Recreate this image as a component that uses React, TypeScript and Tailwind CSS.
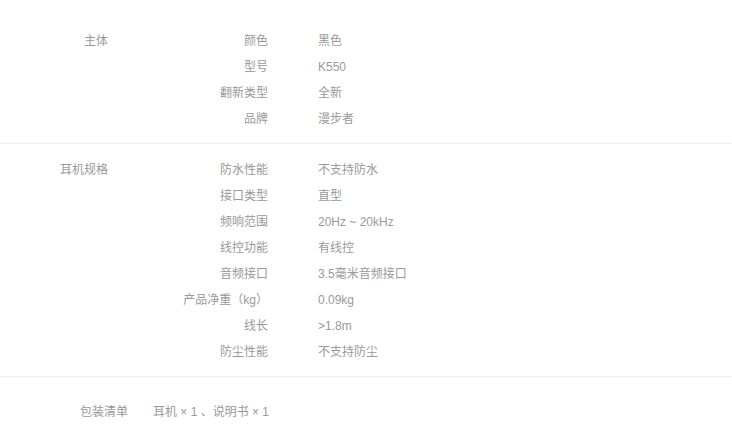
const groups = [
  {
    title: "主体",
    items: [
      ["颜色", "黑色"],
      ["型号", "K550"],
      ["翻新类型", "全新"],
      ["品牌", "漫步者"],
    ],
  },
  {
    title: "耳机规格",
    items: [
      ["防水性能", "不支持防水"],
      ["接口类型", "直型"],
      ["频响范围", "20Hz ~ 20kHz"],
      ["线控功能", "有线控"],
      ["音频接口", "3.5毫米音频接口"],
      ["产品净重（kg）", "0.09kg"],
      ["线长", ">1.8m"],
      ["防尘性能", "不支持防尘"],
    ],
  },
];

export default function App() {
  return (
    <div
      className="w-[732px] h-[431px] bg-white text-[12px] text-[#999] overflow-hidden"
      style={{ fontFamily: '"Liberation Sans", "Noto Sans CJK SC", sans-serif' }}
    >
      <div className="pt-[15px]">
        {groups.map((g) => (
          <div key={g.title} className="flex py-3 border-b border-[#eee] mr-px">
            <div className="w-[108px] text-right pt-[2px] leading-[24px]">{g.title}</div>
            <div className="flex flex-col">
              {g.items.map(([k, v]) => (
                <div key={k} className="flex pt-[2px] leading-[24px]">
                  <div className="w-[160px] text-right">{k}</div>
                  <div className="ml-[50px]">{v}</div>
                </div>
              ))}
            </div>
          </div>
        ))}
        <div className="flex pt-[23px] leading-[24px]">
          <div className="w-[128px] text-right">包装清单</div>
          <div className="ml-[25px]">耳机 × 1 、说明书 × 1</div>
        </div>
      </div>
    </div>
  );
}
